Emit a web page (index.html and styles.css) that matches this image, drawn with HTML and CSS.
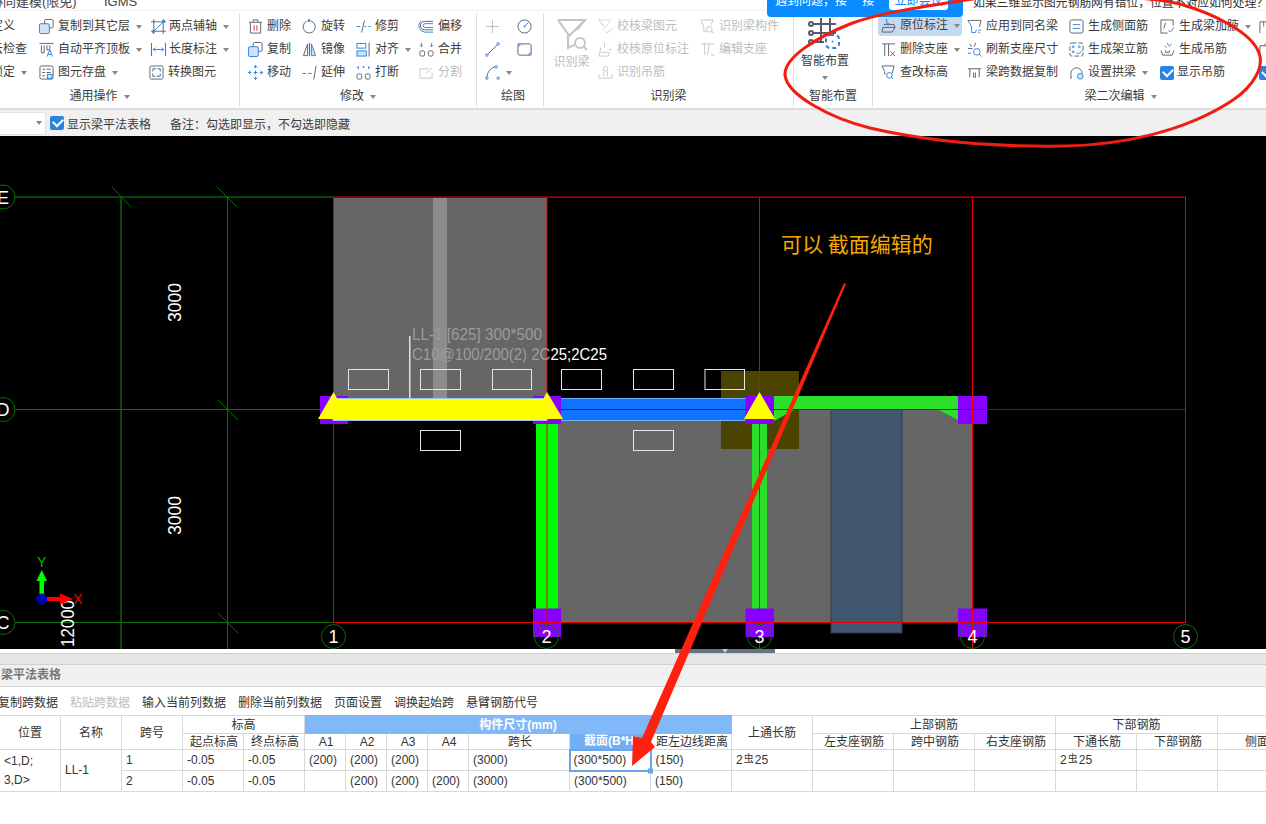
FILE: index.html
```html
<!DOCTYPE html>
<html lang="zh">
<head>
<meta charset="utf-8">
<title>梁平法表格</title>
<link rel="stylesheet" href="styles.css">
</head>
<body>
<div class="page">
  <div class="topbar"><span class="tab-a">协同建模(限免)</span><span class="tab-b">IGMS</span></div>

  <div class="ribbon">
    <section class="group g1">
      <div class="rows">
        <div class="it"><svg class="ic" viewBox="0 0 16 16"><rect x="2" y="2" width="12" height="12"/></svg>定义</div>
        <div class="it"><svg class="ic" viewBox="0 0 16 16"><rect x="6" y=".5" width="9" height="9" rx="1.5"/><rect class="bf" x=".5" y="5" width="10.5" height="10.5" rx="1.5"/></svg>复制到其它层<i class="car"></i></div>
        <div class="it tight"><svg class="ic" viewBox="0 0 16 16"><path d="M3 0v16M13 0v16M0 3h16M0 13h16"/><path class="b" d="M2 14L14 2"/><circle class="bd" cx="2.500" cy="13.500" r="1.500"/><circle class="bd" cx="13.500" cy="2.500" r="1.500"/></svg>两点辅轴<i class="car"></i></div>
        <div class="it"><svg class="ic" viewBox="0 0 16 16"><circle cx="8" cy="8" r="6"/></svg>云检查</div>
        <div class="it"><svg class="ic" viewBox="0 0 16 16"><path d="M.5 1.500h15M2.500 3.500v8h3v-8M8.500 3.500v5h3v-5"/><path class="b" d="M8.500 15.500l3-7 3 7M9.700 13.200h3.600"/></svg>自动平齐顶板<i class="car"></i></div>
        <div class="it tight"><svg class="ic" viewBox="0 0 16 16"><path d="M.5 1v14M15.500 1v14"/><path class="b" d="M2.500 8h11M2.500 8l2-2M2.500 8l2 2M13.500 8l-2-2M13.500 8l-2 2"/></svg>长度标注<i class="car"></i></div>
        <div class="it"><svg class="ic" viewBox="0 0 16 16"><rect x="2" y="2" width="12" height="12"/></svg>锁定<i class="car"></i></div>
        <div class="it"><svg class="ic" viewBox="0 0 16 16"><rect x="1" y="1" width="14" height="14" rx="1.5"/><path d="M3.500 4.500h3M8 4.500h4.500M3.500 8h3M8 8h4.500M3.500 11.500h3"/><rect class="bf" x="9" y="10" width="5" height="4.500"/></svg>图元存盘<i class="car"></i></div>
        <div class="it shift"><svg class="ic" viewBox="0 0 16 16"><rect x="1" y="1" width="14" height="14" rx="1.500"/><path class="b" d="M4 7V4h3M12 9v3H9M6 3l1 1-1 1M10 11l-1 1 1 1"/><path d="M9 4h3v3M4 9v3h3"/></svg>转换图元</div>
      </div>
      <div class="glabel">通用操作<i class="car"></i></div>
    </section>

    <section class="group g2">
      <div class="rows">
        <div class="it"><svg class="ic" viewBox="0 0 16 16"><path d="M1 3.500h14M5.500 3V1h5v2M2.500 4v11h11V4"/><path class="r" d="M6.500 6.500v6M9.500 6.500v6"/></svg>删除</div>
        <div class="it"><svg class="ic" viewBox="0 0 16 16"><path d="M9.500 2.200A6.500 6.500 0 1 1 5 2.500"/><circle class="bd" cx="7.500" cy="1.800" r="1.500"/></svg>旋转</div>
        <div class="it"><svg class="ic" viewBox="0 0 16 16"><path d="M6 14.500L9 1.500"/><path class="b" d="M.5 8h4M9 8h2M13 8h2.500"/></svg>修剪</div>
        <div class="it"><svg class="ic" viewBox="0 0 16 16"><path d="M15 2.500H6a4.500 4.500 0 0 0 0 9h9"/><path class="b" d="M15 5H6.500a2 2 0 0 0 0 4H15M15 14H6A7 7 0 0 1 2 2"/></svg>偏移</div>
        <div class="it"><svg class="ic" viewBox="0 0 16 16"><rect x="5.500" y=".5" width="9.500" height="9.500" rx="1.500"/><rect class="bf" x=".5" y="5" width="10.500" height="10.500" rx="1.500"/></svg>复制</div>
        <div class="it"><svg class="ic" viewBox="0 0 16 16"><path d="M6 2L1.500 14.500H6z"/><path class="bf" d="M10 2l4.500 12.500H10z"/><path d="M8 1v14"/></svg>镜像</div>
        <div class="it"><svg class="ic" viewBox="0 0 16 16"><rect class="bl" x="1" y="1.500" width="9.500" height="5"/><rect class="bf" x="1" y="9.500" width="10" height="5.500"/><path d="M14 .5v15"/></svg>对齐<i class="car"></i></div>
        <div class="it"><svg class="ic" viewBox="0 0 16 16"><path class="b" d="M2.500 1v4M1 3.500l1.500 1.500L4 3.500M13.500 1v4M12 3.500l1.500 1.500L15 3.500"/><rect x="1" y="9.500" width="5" height="5.500" rx="1.500"/><rect x="10" y="9.500" width="5" height="5.500" rx="1.500"/></svg>合并</div>
        <div class="it"><svg class="ic" viewBox="0 0 16 16"><path class="b" d="M8 .5v3M8 6v4M8 12.500v3M.5 8h3M6 8h4M12.500 8h3M6 2.500L8 .5l2 2M6 13.500l2 2 2-2M2.500 6L.5 8l2 2M13.500 6l2 2-2 2"/></svg>移动</div>
        <div class="it"><svg class="ic" viewBox="0 0 16 16"><path class="b" d="M.5 9h4M6.500 9h4"/><path d="M12.500 15.500L15 1"/></svg>延伸</div>
        <div class="it"><svg class="ic" viewBox="0 0 16 16"><path class="b" d="M2.500 1.500v3M1 3l1.500-1.500M13.500 1.500v3M15 3l-1.500-1.500"/><circle class="bd" cx="8" cy="2" r="1"/><rect x="1" y="9.500" width="5" height="5.500" rx="1.500"/><rect x="10" y="9.500" width="5" height="5.500" rx="1.500"/></svg>打断</div>
        <div class="it off"><svg class="ic" viewBox="0 0 16 16"><path d="M10 4H1v10h13V8"/><path d="M7 9l7-6"/></svg>分割</div>
      </div>
      <div class="glabel">修改<i class="car"></i></div>
    </section>

    <section class="group g3">
      <div class="rows">
        <div class="it"><svg class="ic" viewBox="0 0 16 16"><path class="lg" d="M8 1v5M8 10v5M1 8h5M10 8h5"/><circle class="lgf" cx="8" cy="8" r="1.500"/></svg></div>
        <div class="it"><svg class="ic" viewBox="0 0 16 16"><circle cx="8" cy="8" r="7"/><path class="b" d="M8 8l4-4"/><circle class="bd" cx="8" cy="8" r="1"/></svg></div>
        <div class="it"><svg class="ic" viewBox="0 0 16 16"><path d="M2 14L14 2"/><circle class="bo" cx="2" cy="14" r="1.300"/><circle class="bo" cx="14" cy="2" r="1.300"/></svg></div>
        <div class="it"><svg class="ic" viewBox="0 0 16 16"><rect x="1" y="2" width="14" height="12" rx="2"/><circle class="bo" cx="2" cy="3" r="1.200"/><circle class="bo" cx="14" cy="13" r="1.200"/></svg></div>
        <div class="it arc"><svg class="ic" viewBox="0 0 16 16"><path d="M2 14C2 7 7 2 12 2"/><circle class="bo" cx="2" cy="14" r="1.300"/><circle class="bo" cx="12" cy="2" r="1.300"/><circle class="bo" cx="14" cy="14" r="1.300"/></svg><i class="car"></i></div>
      </div>
      <div class="glabel">绘图</div>
    </section>

    <section class="group g4">
      <div class="g4-body">
        <div class="bigbtn off">
          <svg class="big" viewBox="0 0 30 34"><path class="lg2" d="M1 2h27L20 12M1 2l10 14v14l6-3"/><path class="lg2" d="M1 2l27 0-18 18"/><circle class="lg2" cx="23" cy="25" r="5"/><path class="lg2" d="M27 29l3 3"/></svg>
          <span>识别梁</span>
        </div>
        <div class="rows">
          <div class="it off"><svg class="ic" viewBox="0 0 16 16"><path stroke-dasharray="2 1" d="M1 1h13L5 12"/><path d="M1 1l5 7M8 13l2 2 5-5"/></svg>校核梁图元</div>
          <div class="it off"><svg class="ic" viewBox="0 0 16 16"><path d="M1 1h13l-2 5M1 1l3 7v5h3"/><circle cx="10" cy="11" r="3"/><path d="M12 13l3 2"/></svg>识别梁构件</div>
          <div class="it off"><svg class="ic" viewBox="0 0 16 16"><path d="M7 1v5M3 6l-2 9h10l1-4H3"/><path d="M12 8h3"/></svg>校核原位标注</div>
          <div class="it off"><svg class="ic" viewBox="0 0 16 16"><path d="M1 2h14M5 2v12M10 2L8 14M12 14h3"/></svg>编辑支座</div>
          <div class="it off"><svg class="ic" viewBox="0 0 16 16"><circle cx="8" cy="4" r="2.500"/><path d="M1 10v4h14v-4M6 7v5M10 7v5"/></svg>识别吊筋</div>
        </div>
      </div>
      <div class="glabel">识别梁</div>
    </section>

    <section class="group g5">
      <div class="bigbtn smart">
        <svg class="big2" viewBox="0 0 34 34"><path class="st2" d="M4 7h24M4 16h24M4 25h12M13 1v24M22 1v14"/><circle class="st2" cx="3" cy="7" r="2"/><circle class="st2" cx="3" cy="16" r="2"/><circle class="st2" cx="3" cy="25" r="2"/><rect class="bt2" x="18" y="18" width="13" height="13" rx="4" stroke-dasharray="4 3"/><circle class="bd" cx="24.500" cy="24.500" r="1"/></svg>
        <span>智能布置</span>
        <i class="car"></i>
      </div>
      <div class="glabel">智能布置</div>
    </section>

    <section class="group g6">
      <div class="rows">
        <div class="it sel"><svg class="ic" viewBox="0 0 16 16"><path class="b" d="M6 1v5h3"/><path d="M3 7h11l1 3H2l-1 5h11l3-5"/></svg>原位标注<i class="car"></i></div>
        <div class="it"><svg class="ic" viewBox="0 0 16 16"><path d="M1 1.500h14l-2 7"/><path class="b" d="M1 1.500l4 7v6h4l1-3"/><path class="b" d="M12 12h3M12 14l2 1"/></svg>应用到同名梁</div>
        <div class="it"><svg class="ic" viewBox="0 0 16 16"><rect x="1" y="1" width="14" height="14" rx="2"/><path class="b" d="M4 6h8M4 10h8"/></svg>生成侧面筋</div>
        <div class="it"><svg class="ic" viewBox="0 0 16 16"><path d="M14 7V1H1v14h7M1 1"/><path d="M6 4l-2 6"/><path class="b" d="M9 12l2 2 4-5"/></svg>生成梁加腋<i class="car"></i></div>
        <div class="it"><svg class="ic" viewBox="0 0 16 16"><path d="M1 15V3h14v12M5 3v5M10 3v5"/></svg>生成</div>
        <div class="it"><svg class="ic" viewBox="0 0 16 16"><path d="M1 2h14M4 2v13M8 2v13"/><path class="r" d="M10 10l5 5M15 10l-5 5"/></svg>删除支座<i class="car"></i></div>
        <div class="it"><svg class="ic" viewBox="0 0 16 16"><path d="M1 7h5M9 1l-1 4M3 2l2 3M1 12h3"/><circle class="bl" cx="10.500" cy="10.500" r="3.500"/><path class="b" d="M13 13l2.500 2.500"/></svg>刷新支座尺寸</div>
        <div class="it"><svg class="ic" viewBox="0 0 16 16"><rect stroke-dasharray="5 2" x="1" y="1" width="14" height="14" rx="2"/><circle class="bo" cx="4.500" cy="5" r="1"/><circle class="bo" cx="11" cy="5" r="1"/><circle class="bo" cx="4.500" cy="10.500" r="1"/><path class="b" d="M8 11l2 2 4-4"/></svg>生成架立筋</div>
        <div class="it"><svg class="ic" viewBox="0 0 16 16"><path class="b" d="M8 1l1 3M5 4l2 2M12 2l-2 3"/><path d="M1 9l2 5h10l2-5M6 9v2h4V9"/></svg>生成吊筋</div>
        <div class="it"><svg class="ic" viewBox="0 0 16 16"><path d="M1 15V4h14v11M5 4L8 1l3 3"/></svg>生成</div>
        <div class="it"><svg class="ic" viewBox="0 0 16 16"><path d="M1 1h13l-2 8M1 1l3 6v3"/><circle class="bl" cx="9" cy="11" r="3"/><path class="b" d="M11 13l2 2"/></svg>查改标高</div>
        <div class="it"><svg class="ic" viewBox="0 0 16 16"><path d="M1 4h14M3 4v9M13 4v9M7 8v5h2V8"/></svg>梁跨数据复制</div>
        <div class="it"><svg class="ic" viewBox="0 0 16 16"><path d="M2 14V9a6 6 0 0 1 12 0M2 14h1"/><circle class="bf" cx="12" cy="12" r="3"/></svg>设置拱梁<i class="car"></i></div>
        <div class="it chk"><span class="check"></span>显示吊筋</div>
        <div class="it chk"><span class="check"></span>显示</div>
      </div>
      <div class="glabel">梁二次编辑<i class="car"></i></div>
    </section>
  </div>

  <div class="optbar">
    <div class="select"><i class="car"></i></div>
    <span class="check"></span><span class="opt-text">显示梁平法表格</span>
    <span class="opt-note">备注：勾选即显示，不勾选即隐藏</span>
  </div>

  <svg class="canvas" viewBox="0 136 1266 513" xmlns="http://www.w3.org/2000/svg">
    <rect x="0" y="136" width="1266" height="513" fill="#000"/>
    <rect class="gy" x="333" y="197" width="214" height="201"/>
    <rect x="433" y="197" width="14" height="201" fill="#8c8c8c"/>
    <rect class="gy" x="547" y="409" width="426" height="213"/>
    <rect x="831" y="409" width="71" height="224" fill="#41576f" stroke="#2d3d4e"/>
    <rect x="721" y="371" width="78" height="78" fill="#4a4400"/>
    <path class="gl1" d="M15 197H333M121 197V649"/>
    <path class="gl2" d="M15 409.500H320M15 622.500H333M227.500 197V649M112 187l19 20M217 187l20 20M218 400l20 20M218 613l20 20"/>
    <rect x="536" y="424" width="22" height="185" fill="#00ff00"/>
    <rect x="752" y="424" width="15" height="185" fill="#2bdc2b"/>
    <path d="M774 396H958V420L938 409.500H795L774 421Z" fill="#2be02b"/>
    <rect x="547" y="398.500" width="213" height="22" fill="#1173ff" stroke="#6fb0ff"/>
    <g fill="#8800ff">
      <rect x="320" y="396" width="28" height="28"/><rect x="533" y="396" width="28" height="28"/><rect x="745.500" y="396" width="28.500" height="28"/><rect x="958" y="396" width="29" height="28"/>
      <rect x="533" y="608.500" width="28" height="28.500"/><rect x="745.500" y="608.500" width="28.500" height="28.500"/><rect x="958" y="608.500" width="29" height="28.500"/>
    </g>
    <path class="rd1" d="M333.500 197V622.500H1185.500V197ZM547 197V636M759.500 197V649M972.500 197V649"/>
    <path class="rd2" d="M333 197.500H1185M547 409.500H1185"/>
    <rect x="333" y="398.500" width="214" height="22" fill="#ffff00" stroke="#9cc8e8"/>
    <g fill="#ffff00">
      <path d="M333.500 392L349 419H318Z"/><path d="M547 392L563 419H532Z"/><path d="M759.500 392L775 419H744Z"/>
    </g>
    <g class="wbox">
      <rect x="348.500" y="369.500" width="40" height="20"/><rect x="420.500" y="369.500" width="40" height="20"/><rect x="492.500" y="369.500" width="39" height="20"/><rect x="561.500" y="369.500" width="40" height="20"/><rect x="633.500" y="369.500" width="40" height="20"/><rect x="705" y="369.500" width="39.500" height="20"/>
      <rect x="420.500" y="430.500" width="40" height="20"/><rect x="633.500" y="430.500" width="40" height="20"/>
    </g>
    <path d="M409.800 336V398" stroke="#fff" stroke-width="1.200"/>
    <text class="cad dim" x="412" y="340" textLength="130" lengthAdjust="spacingAndGlyphs">LL-1 [625] 300*500</text>
    <text class="cad" x="412" y="360" textLength="195" lengthAdjust="spacingAndGlyphs"><tspan class="dim">C10@100/200(2) 2C</tspan>25;2C25</text>
    <text class="cad big-n" transform="translate(181 322) rotate(-90)" textLength="39" lengthAdjust="spacingAndGlyphs">3000</text>
    <text class="cad big-n" transform="translate(181 535) rotate(-90)" textLength="39" lengthAdjust="spacingAndGlyphs">3000</text>
    <text class="cad big-n" transform="translate(74 647) rotate(-90)" textLength="47" lengthAdjust="spacingAndGlyphs">12000</text>
    <g class="bub">
      <circle cx="3" cy="197" r="12"/><circle cx="3" cy="409.500" r="12"/><circle cx="3" cy="622.500" r="12"/>
      <circle cx="333.500" cy="636.500" r="12"/><circle cx="546.500" cy="636.500" r="12"/><circle cx="759.500" cy="636.500" r="12"/><circle cx="972.500" cy="636.500" r="12"/><circle cx="1185.500" cy="636.500" r="12"/>
    </g>
    <g class="bubt">
      <text x="3" y="203.500">E</text><text x="3" y="416">D</text><text x="3" y="629">C</text>
      <text x="333.500" y="643">1</text><text x="546.500" y="643">2</text><text x="759.500" y="643">3</text><text x="972.500" y="643">4</text><text x="1185.500" y="643">5</text>
    </g>
    <path d="M39.500 594V581H36.500L41.700 570 47 581H44V594Z" fill="#00ff00"/>
    <path d="M47 597H60V593.500L73 599 60 604.500V601H47Z" fill="#ff0000"/>
    <circle cx="41.700" cy="599" r="5.500" fill="#0000b4"/>
    <text class="axis ay" x="41.700" y="567">Y</text>
    <text class="axis ax" x="78" y="604">X</text>
    <text class="note" x="781" y="252">可以 截面编辑的</text>
  </svg>

  <div class="splitter"><div class="grip"><i class="car"></i></div></div>
  <div class="strip"></div>
  <div class="ptitle">梁平法表格</div>
  <div class="tools">
    <span>复制跨数据</span><span class="off">粘贴跨数据</span><span>输入当前列数据</span><span>删除当前列数据</span><span>页面设置</span><span>调换起始跨</span><span>悬臂钢筋代号</span>
  </div>

  <table class="grid">
    <colgroup>
      <col class="w61"><col class="w61"><col class="w61"><col class="w61"><col class="w61">
      <col class="w41"><col class="w41"><col class="w41"><col class="w41"><col class="w101">
      <col class="w81"><col class="w81"><col class="w81"><col class="w81"><col class="w81"><col class="w81"><col class="w81"><col class="w81"><col class="w101"><col class="w81">
    </colgroup>
    <thead>
      <tr class="h1">
        <th rowspan="2">位置</th><th rowspan="2">名称</th><th rowspan="2">跨号</th><th colspan="2">标高</th>
        <th colspan="7" class="blue">构件尺寸(mm)</th>
        <th rowspan="2">上通长筋</th><th colspan="3">上部钢筋</th><th colspan="2">下部钢筋</th><th colspan="2"></th>
      </tr>
      <tr class="h2">
        <th>起点标高</th><th>终点标高</th><th>A1</th><th>A2</th><th>A3</th><th>A4</th><th>跨长</th><th class="blue act">截面(B*H)</th><th>距左边线距离</th>
        <th>左支座钢筋</th><th>跨中钢筋</th><th>右支座钢筋</th><th>下通长筋</th><th>下部钢筋</th><th>侧面钢筋</th><th></th>
      </tr>
    </thead>
    <tbody>
      <tr>
        <td rowspan="2" class="pos">&lt;1,D;<br>3,D&gt;</td><td rowspan="2">LL-1</td><td>1</td><td>-0.05</td><td>-0.05</td><td>(200)</td><td>(200)</td><td>(200)</td><td></td><td>(3000)</td><td class="cur">(300*500)</td><td>(150)</td><td>2<span class="bar">虫</span>25</td><td></td><td></td><td></td><td>2<span class="bar">虫</span>25</td><td></td><td></td><td></td>
      </tr>
      <tr>
        <td>2</td><td>-0.05</td><td>-0.05</td><td></td><td>(200)</td><td>(200)</td><td>(200)</td><td>(3000)</td><td>(300*500)</td><td>(150)</td><td></td><td></td><td></td><td></td><td></td><td></td><td></td><td></td>
      </tr>
    </tbody>
  </table>

  <div class="notice">
    <span class="notice-text">遇到问题，接　 接</span>
    <span class="notice-btn">立即会议</span>
  </div>
  <div class="hint">如果三维显示图元钢筋网有错位，位置不对应如何处理？</div>

  <svg class="marks" viewBox="0 0 1266 824" xmlns="http://www.w3.org/2000/svg">
    <rect class="handle" x="648" y="768.500" width="5" height="5"/>
    <path class="ell" d="M985 -3C930 6 880 12 850 24C815 38 784 58 785 75C787 95 830 118 870 128C930 142 1000 147 1066 146C1120 145 1185 132 1233 100C1255 85 1264 66 1259 53C1252 33 1215 14 1180 4C1150 -3 1110 -4 1080 -4"/>
    <path class="arw" d="M844 283L846 284 651 742 655 747 632 766 633 736 642 738Z"/>
  </svg>
</div>
</body>
</html>
```

FILE: styles.css
```css
* { box-sizing: border-box; }
html, body { margin: 0; padding: 0; background: #fff; }
body { font-family: "Liberation Sans", "Noto Sans CJK SC", sans-serif; font-size: 12px; color: #3c3c3c; }
.page { position: relative; width: 1266px; height: 824px; overflow: hidden; display: flex; flex-direction: column; background: #fff; }

.topbar { flex: none; height: 10px; overflow: hidden; display: flex; font-size: 13px; line-height: 10px; color: #444; background: #fff; }
.tab-a { margin-left: -10px; width: 114px; line-height: 4px; white-space: nowrap; }
.tab-b { line-height: 4px; font-size: 13px; }

.ribbon { flex: none; height: 100px; display: flex; border-top: 1px solid #f0f0f0; border-bottom: 2px solid #dcdcdc; background: #fff; }
.group { flex: none; display: flex; flex-direction: column; height: 94px; margin-top: 2px; border-right: 1px solid #dedede; }
.rows { display: grid; grid-auto-rows: 23px; height: 73px; padding-top: 2px; }
.it { display: flex; align-items: center; white-space: nowrap; line-height: 23px; }
.ic { width: 15px; height: 15px; margin-right: 4px; flex: none; fill: none; stroke: #59606b; stroke-width: 1; overflow: visible; }
.ic .b { stroke: #2f7fe0; }
.ic .r { stroke: #e03030; }
.ic .bf { fill: #cfe2f8; stroke: #2f7fe0; }
.ic .bl { stroke: #2f7fe0; }
.ic .bd { fill: #2f7fe0; stroke: none; }
.ic .bo { fill: #fff; stroke: #2f7fe0; }
.ic .lg { stroke: #bcbcbc; }
.ic .lgf { fill: #bcbcbc; stroke: none; }
.tight .ic { margin-right: 3px; }
.car { display: inline-block; flex: none; width: 0; height: 0; margin-left: 6px; border: 3.5px solid transparent; border-top: 4px solid #888; border-bottom: 0; }
.off { color: #bdbdbd; }
.off .ic { stroke: #c6c6c6; }
.glabel { flex: none; height: 21px; line-height: 21px; display: flex; justify-content: center; align-items: center; color: #3c3c3c; }

.g1 { margin-left: -38px; width: 278px; padding-left: 10px; }
.g1 .rows { grid-template-columns: 67px 112px 1fr; grid-template-rows: repeat(3, 23px); }
.g1 .shift { margin-left: -2px; }
.g1 .glabel { margin-left: -12px; }
.g2 { width: 237px; padding-left: 8px; }
.g2 .rows { grid-template-columns: 54px 54px 63px 57px; }
.g2 .glabel { margin-left: -8px; }
.g3 { width: 67px; padding-left: 8px; }
.g3 .rows { grid-template-columns: 32px 1fr; }
.g3 .arc .ic { margin-right: 0; }
.g3 .glabel { margin-left: -2px; }
.g4 { width: 250px; }
.g4-body { display: flex; height: 73px; }
.g4 .rows { grid-template-columns: 102px 1fr; margin-left: 3px; }
.bigbtn { width: 47px; margin-left: 4px; display: flex; flex-direction: column; align-items: center; padding-top: 5px; }
.big { width: 30px; height: 34px; fill: none; }
.lg2 { fill: none; stroke: #c4c4c4; stroke-width: 2; }
.bigbtn span { line-height: 14px; margin-top: 3px; white-space: nowrap; }
.g5 { width: 79px; }
.smart { width: 50px; margin-left: 6px; height: 73px; padding-top: 4px; }
.big2 { width: 34px; height: 34px; fill: none; overflow: visible; }
.st2 { fill: none; stroke: #525c6a; stroke-width: 2; }
.bt2 { fill: none; stroke: #2f7fe0; stroke-width: 2; }
.big2 .bd { fill: #2f7fe0; }
.smart .car { margin: 8px 0 0; }
.g6 { width: 490px; padding-left: 5px; border-right: 0; }
.g6 .rows { grid-template-columns: 89px 102px 90px 100px 1fr; }
.g6 .it { padding-left: 3px; }
.g6 .it:nth-child(5n+2) { padding-left: 0; }
.g6 .it:nth-child(5n+3) { padding-left: 0; }
.g6 .it:nth-child(5n+4) { padding-left: 1px; }
.g6 .it:nth-child(5n) { padding-left: 0; }
.g6 .sel { background: #c5daf0; border-radius: 3px; height: 21px; margin: 0 5px 2px 0; }
.g6 .chk { padding-left: 0; }
.check { position: relative; display: inline-block; flex: none; width: 14px; height: 14px; border-radius: 2px; background: #2a82e4; }
.check::after { content: ""; position: absolute; left: 3px; top: 2px; width: 8px; height: 5px; border-left: 2px solid #fff; border-bottom: 2px solid #fff; transform: rotate(-45deg); }
.chk .check { margin-right: 3px; }

.optbar { flex: none; height: 26px; display: flex; align-items: center; background: #f0f0f0; }
.select { flex: none; width: 46px; height: 23px; background: #fff; border: 1px solid #e2e2e2; border-left: 0; border-radius: 0 3px 3px 0; display: flex; align-items: center; justify-content: flex-end; padding-right: 3px; margin-right: 4px; }
.opt-text { margin-left: 3px; }
.opt-note { margin-left: 19px; }

.canvas { flex: none; display: block; width: 1266px; height: 513px; }
.gy { fill: #666; }
.gl1 { fill: none; stroke: #0b5a0b; stroke-width: 1.6; }
.gl2 { fill: none; stroke: #0b6e0b; stroke-width: 1; }
.rd1 { fill: none; stroke: #e80000; stroke-width: 1; }
.rd2 { fill: none; stroke: #a00000; stroke-width: 1.200; }
.wbox rect { fill: none; stroke: #e6e6e6; stroke-width: 1; }
.cad { font-size: 17px; fill: #fff; font-family: "Liberation Sans", sans-serif; }
.cad .dim, .dim { fill: #9c9c9c; }
.big-n { font-size: 19px; }
.bub circle { fill: none; stroke: #0b6e0b; stroke-width: 1; }
.bubt text { fill: #fff; font-size: 18px; text-anchor: middle; font-family: "Liberation Sans", sans-serif; }
.axis { font-size: 14px; text-anchor: middle; font-family: "Liberation Sans", sans-serif; }
.ay { fill: #00c000; }
.ax { fill: #ff0000; }
.note { font-size: 21px; fill: #f5a800; font-family: "Noto Sans CJK SC", sans-serif; }

.splitter { flex: none; height: 5px; border-bottom: 1px solid #d0d0d0; position: relative; background: #fff; }
.grip { width: 100px; height: 4px; margin-left: 675px; background: #667380; display: flex; justify-content: center; }
.grip .car { margin: 0; border-top-color: #c8ccd0; }
.strip { flex: none; height: 11px; background: #e6e6e6; border-bottom: 1px solid #d0d0d0; }
.ptitle { flex: none; height: 22px; line-height: 21px; padding-left: 1px; font-weight: 700; color: #777; background: #f0f0f0; border-bottom: 1px solid #d8d8d8; }
.tools { flex: none; height: 28px; display: flex; gap: 12px; align-items: center; margin-left: -2px; color: #333; white-space: nowrap; }
.tools .off { color: #bdbdbd; }

.grid { flex: none; table-layout: fixed; border-collapse: collapse; width: 1399px; margin-left: -1px; font-size: 12px; color: #333; }
.w61 { width: 61px; }
.w41 { width: 41px; }
.w81 { width: 81px; }
.w101 { width: 101px; }
.grid th, .grid td { border: 1px solid #d9d9d9; padding: 0 4px; overflow: hidden; white-space: nowrap; font-weight: 400; }
.grid th { text-align: center; padding: 0; line-height: 14px; }
.h1 th { height: 18px; }
.h2 th { height: 16px; padding-left: 2px; }
.grid td { height: 21px; line-height: 19px; }
.grid .blue { background: #80b8f8; color: #fff; font-weight: 700; border-color: #80b8f8; }
.grid .act { background: #70aef5; }
.grid .cur { border: 2px solid #6aa5e8; padding-left: 3px; }
.grid .pos { line-height: 19px; padding-left: 4px; }
.bar { font-size: 10px; position: relative; top: -2px; margin: 0 1px; }

.notice { position: absolute; left: 767px; top: -3px; width: 196px; height: 20px; background: #0a8cff; border-radius: 0 0 4px 4px; display: flex; color: #fff; line-height: 8px; }
.notice-text { margin-left: 8px; width: 114px; white-space: nowrap; }
.notice-btn { width: 59px; height: 13px; background: #fff; color: #0a8cff; text-align: center; border-radius: 0 0 3px 3px; line-height: 8px; }
.hint { position: absolute; left: 973px; top: -3px; line-height: 12px; font-size: 12px; letter-spacing: -.2px; color: #333; white-space: nowrap; }
.marks { position: absolute; left: 0; top: 0; width: 1266px; height: 824px; pointer-events: none; }
.handle { fill: #6aa5e8; }
.ell { fill: none; stroke: #f01e10; stroke-width: 3; }
.arw { fill: #ff2010; }
```
